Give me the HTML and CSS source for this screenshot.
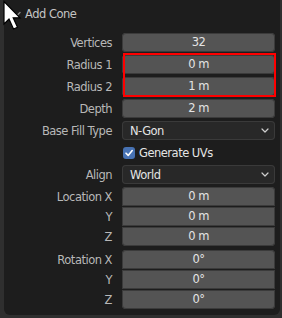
FILE: index.html
```html
<!DOCTYPE html>
<html>
<head>
<meta charset="utf-8">
<link rel="stylesheet" href="styles.css">
</head>
<body>
<div class="panel">
  <div class="header">
    <svg class="chev" width="9" height="7" viewBox="0 0 9 7"><path d="M1 1.5 L4.5 5 L8 1.5" fill="none" stroke="#8a8a8a" stroke-width="1.4" stroke-linecap="round" stroke-linejoin="round"/></svg>
    <span class="title">Add Cone</span>
  </div>
  <div class="rows">
    <div class="row"><span class="label">Vertices</span><div class="field">32</div></div>
    <div class="hl">
      <div class="row"><span class="label">Radius 1</span><div class="field">0 m</div></div>
      <div class="row"><span class="label">Radius 2</span><div class="field">1 m</div></div>
    </div>
    <div class="row"><span class="label">Depth</span><div class="field">2 m</div></div>
    <div class="row"><span class="label">Base Fill Type</span><div class="menu"><span>N-Gon</span><svg width="8" height="5" viewBox="0 0 8 5"><path d="M1 1 L4 4 L7 1" fill="none" stroke="#cfcfcf" stroke-width="1.2" stroke-linecap="round" stroke-linejoin="round"/></svg></div></div>
    <div class="row"><span class="label"></span><div class="check"><span class="box"><svg width="12" height="12" viewBox="0 0 12 12"><path d="M3 6.2 L5.2 8.4 L9.2 3.6" fill="none" stroke="#fff" stroke-width="1.6" stroke-linecap="round" stroke-linejoin="round"/></svg></span><span class="clabel">Generate UVs</span></div></div>
    <div class="row"><span class="label">Align</span><div class="menu"><span>World</span><svg width="8" height="5" viewBox="0 0 8 5"><path d="M1 1 L4 4 L7 1" fill="none" stroke="#cfcfcf" stroke-width="1.2" stroke-linecap="round" stroke-linejoin="round"/></svg></div></div>
    <div class="group">
      <div class="row"><span class="label">Location X</span><div class="field g-top">0 m</div></div>
      <div class="row"><span class="label">Y</span><div class="field g-mid">0 m</div></div>
      <div class="row"><span class="label">Z</span><div class="field g-bot">0 m</div></div>
    </div>
    <div class="group rot">
      <div class="row"><span class="label">Rotation X</span><div class="field g-top">0°</div></div>
      <div class="row"><span class="label">Y</span><div class="field g-mid">0°</div></div>
      <div class="row"><span class="label">Z</span><div class="field g-bot">0°</div></div>
    </div>
  </div>
</div>
<svg class="cursor" width="24" height="32" viewBox="0 0 24 32"><path d="M4 1.5 L4 24 L9 19 L13.5 29 L17.5 27.2 L13.2 17.8 L20 17.8 Z" fill="#fff" stroke="#000" stroke-width="1.2" stroke-linejoin="miter"/></svg>
</body>
</html>
```
FILE: styles.css
```css
html, body {
  margin: 0;
  padding: 0;
}
body {
  width: 282px;
  height: 318px;
  background: #2f2f2f;
  font-family: "DejaVu Sans", sans-serif;
  font-size: 11.5px;
  letter-spacing: -0.5px;
  overflow: hidden;
  position: relative;
}
.panel {
  margin-left: 4px;
  width: 276px;
  height: 315px;
  background: #1d1d1d;
  border-radius: 0 0 6px 6px;
  box-sizing: border-box;
}
.header {
  height: 33px;
  display: flex;
  align-items: flex-start;
  padding-top: 7px;
  box-sizing: border-box;
}
.chev {
  margin-left: 8px;
  margin-top: 4px;
}
.title {
  margin-left: 4px;
  color: #c4c4c4;
  line-height: 14px;
}
.rows {
  display: flex;
  flex-direction: column;
  gap: 3px;
}
.hl {
  display: flex;
  flex-direction: column;
  gap: 3px;
  position: relative;
}
.hl::after {
  content: "";
  position: absolute;
  left: 119px;
  top: -2px;
  width: 153px;
  height: 44px;
  border: 2px solid #ff0000;
  box-sizing: border-box;
  pointer-events: none;
}
.group {
  display: flex;
  flex-direction: column;
  gap: 1px;
}
.rot {
  margin-top: 1px;
}
.row {
  display: grid;
  grid-template-columns: 108px 153px;
  column-gap: 10px;
  height: 19px;
  align-items: center;
}
.label {
  text-align: right;
  color: #b8b8b8;
  white-space: nowrap;
}
.field {
  height: 19px;
  line-height: 19px;
  background: #545454;
  color: #e4e4e4;
  text-align: center;
  border-radius: 4px;
  box-shadow: inset 0 0 0 1px #3b3b3b;
}
.g-top { border-radius: 4px 4px 0 0; }
.g-mid { border-radius: 0; }
.g-bot { border-radius: 0 0 4px 4px; }
.menu {
  height: 19px;
  background: #282828;
  border-radius: 4px;
  box-shadow: inset 0 0 0 1px #3a3a3a;
  display: flex;
  align-items: center;
  justify-content: space-between;
  padding: 0 6px 0 8px;
  color: #e4e4e4;
}
.check {
  display: flex;
  align-items: center;
  gap: 4px;
  padding-left: 1px;
}
.box {
  width: 12px;
  height: 12px;
  background: #4772b3;
  border-radius: 3px;
  display: flex;
}
.clabel {
  color: #e4e4e4;
}
.cursor {
  position: absolute;
  left: 0;
  top: 0;
}
```
